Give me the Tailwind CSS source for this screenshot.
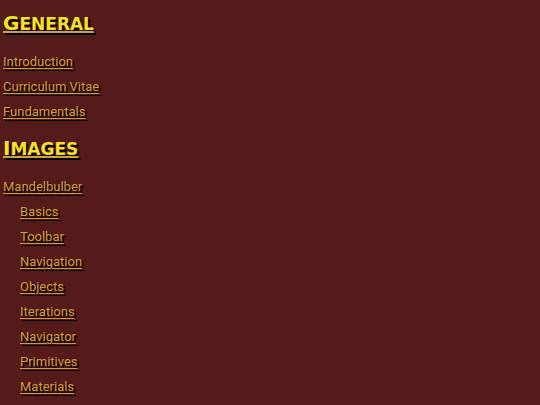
<!DOCTYPE html>
<html lang="en">
<head>
  <meta charset="UTF-8" />
  <meta name="viewport" content="width=device-width, initial-scale=1.0" />
  <title>Contents</title>
  <script src="https://cdn.jsdelivr.net/npm/@tailwindcss/browser@4"></script>
</head>
<body class="min-h-screen bg-[#551a1a] px-[3px] pt-[7px] font-['Roboto',sans-serif] text-[13px] leading-[25px] text-[#cd9b3c]">
  <nav aria-label="Contents" class="[text-shadow:2px_2px_1px_#000]">
    <h2 class="mb-[9px] font-['DejaVu_Sans',sans-serif] text-[17px] leading-8 font-bold text-[#f5e025] uppercase first-letter:text-[20px] underline decoration-[#cda53a] decoration-2 underline-offset-1">General</h2>
    <ul>
      <li><a class="underline underline-offset-2" href="#introduction">Introduction</a></li>
      <li><a class="underline underline-offset-2" href="#cv">Curriculum Vitae</a></li>
      <li><a class="underline underline-offset-2" href="#fundamentals">Fundamentals</a></li>
    </ul>

    <h2 class="mt-2 mb-[9px] font-['DejaVu_Sans',sans-serif] text-[17px] leading-8 font-bold text-[#f5e025] uppercase first-letter:text-[20px] underline decoration-[#cda53a] decoration-2 underline-offset-1">Images</h2>
    <ul>
      <li>
        <a class="underline underline-offset-2" href="#mandelbulber">Mandelbulber</a>
        <ul class="pl-[17px]">
          <li><a class="underline underline-offset-2" href="#basics">Basics</a></li>
          <li><a class="underline underline-offset-2" href="#toolbar">Toolbar</a></li>
          <li><a class="underline underline-offset-2" href="#navigation">Navigation</a></li>
          <li><a class="underline underline-offset-2" href="#objects">Objects</a></li>
          <li><a class="underline underline-offset-2" href="#iterations">Iterations</a></li>
          <li><a class="underline underline-offset-2" href="#navigator">Navigator</a></li>
          <li><a class="underline underline-offset-2" href="#primitives">Primitives</a></li>
          <li><a class="underline underline-offset-2" href="#materials">Materials</a></li>
        </ul>
      </li>
    </ul>
  </nav>
</body>
</html>
